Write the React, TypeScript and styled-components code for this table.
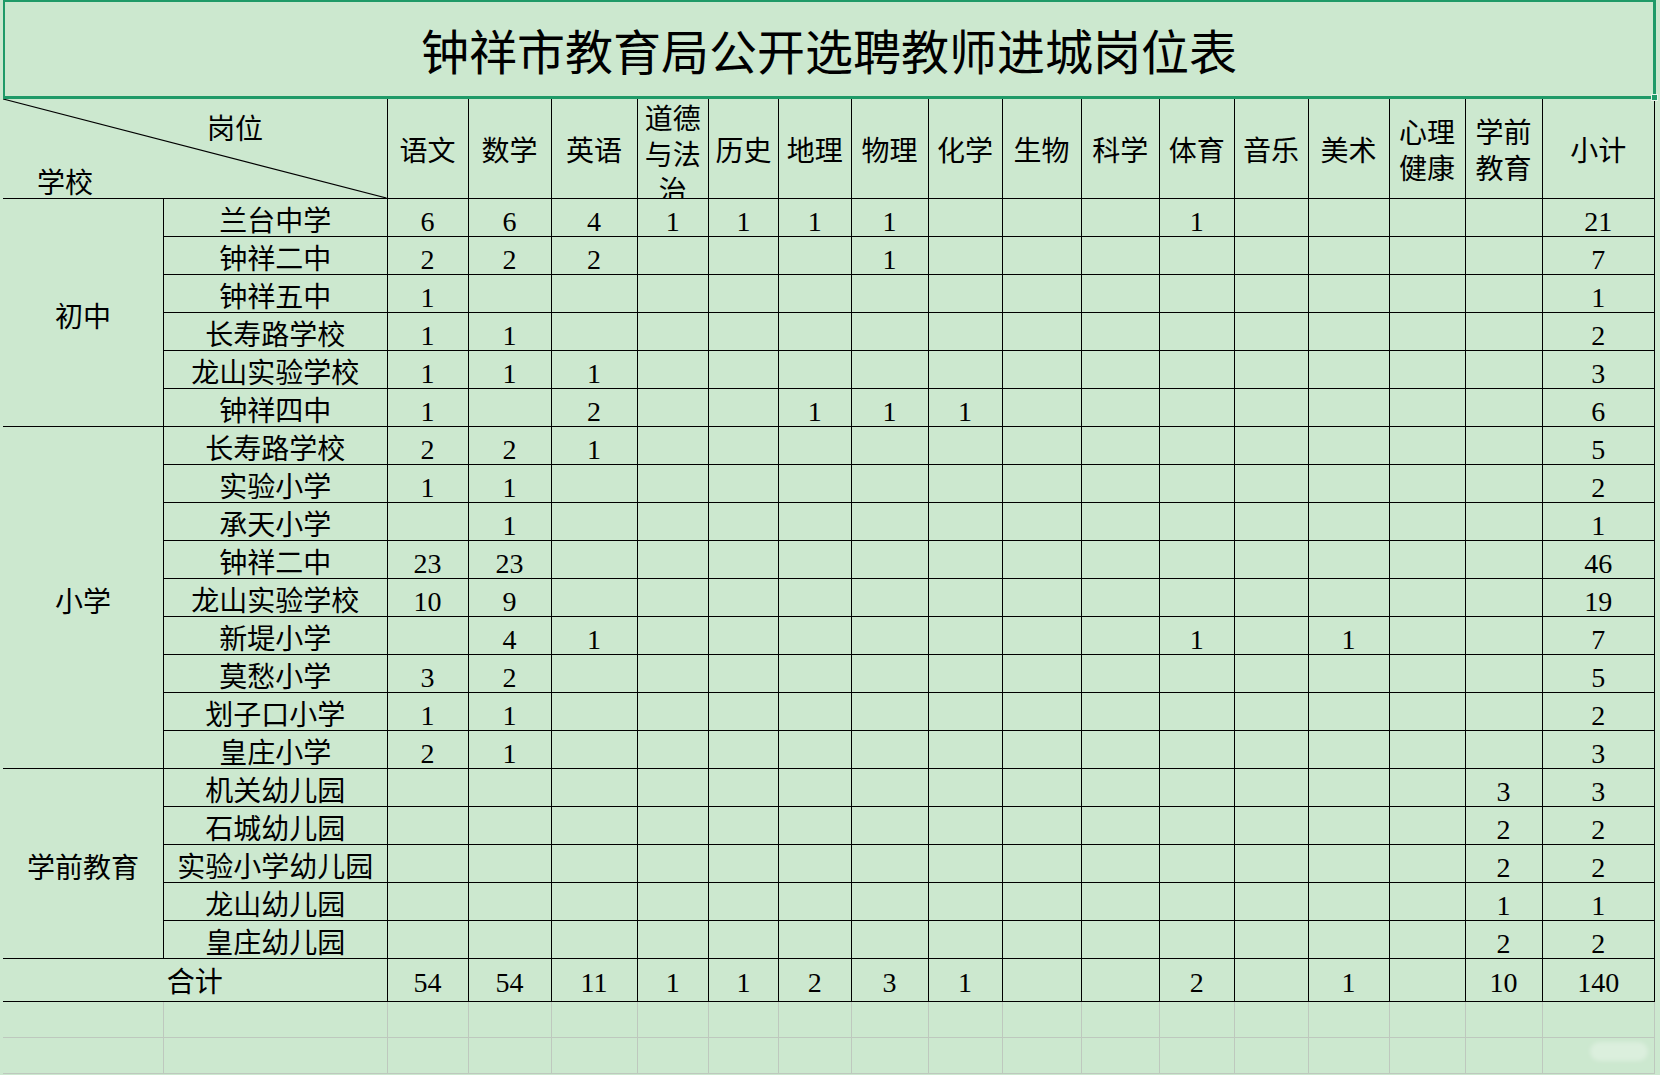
import React from "react";
import styled, { createGlobalStyle } from "styled-components";

const BG = "#cce8cf";
const GREEN = "#1f9a68";
const GRID = "#bec8be";
const FONT = `"Liberation Serif", "Noto Sans CJK SC", serif`;

const COLS = [161, 223.5, 81, 83, 86, 71.5, 70, 72.5, 77, 74, 79, 78.5, 74.5, 74, 81, 76, 77, 112.5];

const SUBJECTS = [
  "语文", "数学", "英语", "道德与法治", "历史", "地理", "物理", "化学", "生物",
  "科学", "体育", "音乐", "美术", "心理健康", "学前教育", "小计",
];

type Row = { name: string; v: Record<number, string> };
type Group = { cat: string; rows: Row[] };

const GROUPS: Group[] = [
  {
    cat: "初中",
    rows: [
      { name: "兰台中学", v: { 0: "6", 1: "6", 2: "4", 3: "1", 4: "1", 5: "1", 6: "1", 10: "1", 15: "21" } },
      { name: "钟祥二中", v: { 0: "2", 1: "2", 2: "2", 6: "1", 15: "7" } },
      { name: "钟祥五中", v: { 0: "1", 15: "1" } },
      { name: "长寿路学校", v: { 0: "1", 1: "1", 15: "2" } },
      { name: "龙山实验学校", v: { 0: "1", 1: "1", 2: "1", 15: "3" } },
      { name: "钟祥四中", v: { 0: "1", 2: "2", 5: "1", 6: "1", 7: "1", 15: "6" } },
    ],
  },
  {
    cat: "小学",
    rows: [
      { name: "长寿路学校", v: { 0: "2", 1: "2", 2: "1", 15: "5" } },
      { name: "实验小学", v: { 0: "1", 1: "1", 15: "2" } },
      { name: "承天小学", v: { 1: "1", 15: "1" } },
      { name: "钟祥二中", v: { 0: "23", 1: "23", 15: "46" } },
      { name: "龙山实验学校", v: { 0: "10", 1: "9", 15: "19" } },
      { name: "新堤小学", v: { 1: "4", 2: "1", 10: "1", 12: "1", 15: "7" } },
      { name: "莫愁小学", v: { 0: "3", 1: "2", 15: "5" } },
      { name: "划子口小学", v: { 0: "1", 1: "1", 15: "2" } },
      { name: "皇庄小学", v: { 0: "2", 1: "1", 15: "3" } },
    ],
  },
  {
    cat: "学前教育",
    rows: [
      { name: "机关幼儿园", v: { 14: "3", 15: "3" } },
      { name: "石城幼儿园", v: { 14: "2", 15: "2" } },
      { name: "实验小学幼儿园", v: { 14: "2", 15: "2" } },
      { name: "龙山幼儿园", v: { 14: "1", 15: "1" } },
      { name: "皇庄幼儿园", v: { 14: "2", 15: "2" } },
    ],
  },
];

const TOTAL = ["54", "54", "11", "1", "1", "2", "3", "1", "", "", "2", "", "1", "", "10", "140"];

const Global = createGlobalStyle`
  html, body {
    margin: 0;
    padding: 0;
    background: ${BG};
    font-family: ${FONT};
    color: #000;
  }
  * { box-sizing: border-box; }
`;

const Page = styled.div`
  position: relative;
  width: 1660px;
  height: 1075px;
  overflow: hidden;
  background: ${BG};
  padding-left: 3px;
  display: flex;
  flex-direction: column;
`;

const TitleBox = styled.div`
  position: relative;
  width: 1653px;
  height: 99px;
  border-top: 2px solid ${GREEN};
  border-left: 2px solid ${GREEN};
  border-right: 3px solid ${GREEN};
  border-bottom: 3px solid ${GREEN};
  display: flex;
  align-items: center;
  justify-content: center;
  padding-top: 10px;
  font-size: 48px;
  line-height: 48px;
  color: #000;
`;

const Handle = styled.div`
  position: absolute;
  right: -5px;
  bottom: -5px;
  width: 7px;
  height: 7px;
  background: ${GREEN};
  border: 1px solid #e8f5ea;
`;

const Table = styled.div`
  display: grid;
  grid-template-columns: ${COLS.map((c) => `${c}px`).join(" ")};
  grid-template-rows: 100px repeat(20, 38px) 43px 36px 36px;
  font-size: 28px;
`;

const Cell = styled.div`
  display: flex;
  justify-content: center;
  border-right: 1px solid #000;
  border-bottom: 1px solid #000;
  overflow: hidden;
  white-space: nowrap;
`;

const Corner = styled(Cell)`
  position: relative;
  grid-column: span 2;
  flex-direction: column;
  justify-content: space-between;
  align-items: flex-start;
  padding-top: 17px;
  line-height: 28px;
`;

const CornerLabel = styled.span<{ $indent: number }>`
  margin-left: ${(p) => p.$indent}px;
`;

const Diagonal = styled.svg`
  position: absolute;
  inset: 0;
  width: 100%;
  height: 100%;
`;

const HeadCell = styled(Cell)<{ $tall?: boolean }>`
  align-items: ${(p) => (p.$tall ? "flex-start" : "center")};
  padding-top: ${(p) => (p.$tall ? "3px" : "6px")};
  line-height: 36px;
  white-space: normal;
  word-break: break-all;
  text-align: center;
`;

const CatCell = styled(Cell)<{ $span: number }>`
  grid-row: span ${(p) => p.$span};
  align-items: center;
  padding-top: 10px;
  line-height: 28px;
`;

const DataCell = styled(Cell)`
  align-items: flex-end;
  line-height: 28px;
`;

const TotalLabel = styled(Cell)`
  grid-column: span 2;
  align-items: flex-end;
  padding-bottom: 4px;
  line-height: 28px;
`;

const TotalCell = styled(Cell)`
  align-items: flex-end;
  padding-bottom: 4px;
  line-height: 28px;
`;

const BlankCell = styled.div`
  border-right: 1px solid ${GRID};
  border-bottom: 1px solid ${GRID};
`;

const Watermark = styled.div`
  position: absolute;
  left: 1590px;
  top: 1042px;
  width: 58px;
  height: 19px;
  border-radius: 10px;
  background: rgba(255, 255, 255, 0.3);
  filter: blur(2px);
`;

export default function App() {
  return (
    <>
      <Global />
      <Page>
        <TitleBox>
          钟祥市教育局公开选聘教师进城岗位表
          <Handle />
        </TitleBox>
        <Table>
          <Corner>
            <Diagonal viewBox="0 0 100 100" preserveAspectRatio="none">
              <line x1="0" y1="0" x2="100" y2="100" stroke="#000" strokeWidth="1.2" vectorEffect="non-scaling-stroke" />
            </Diagonal>
            <CornerLabel $indent={204}>岗位</CornerLabel>
            <CornerLabel $indent={34}>学校</CornerLabel>
          </Corner>
          {SUBJECTS.map((s, i) => (
            <HeadCell key={s} $tall={i === 3}>
              {s}
            </HeadCell>
          ))}
          {GROUPS.map((g) => (
            <React.Fragment key={g.cat}>
              <CatCell $span={g.rows.length}>{g.cat}</CatCell>
              {g.rows.map((r, ri) => (
                <React.Fragment key={g.cat + ri}>
                  <DataCell>{r.name}</DataCell>
                  {SUBJECTS.map((_, ci) => (
                    <DataCell key={ci}>{r.v[ci] ?? ""}</DataCell>
                  ))}
                </React.Fragment>
              ))}
            </React.Fragment>
          ))}
          <TotalLabel>合计</TotalLabel>
          {TOTAL.map((t, i) => (
            <TotalCell key={i}>{t}</TotalCell>
          ))}
          {Array.from({ length: 36 }).map((_, i) => (
            <BlankCell key={i} />
          ))}
        </Table>
        <Watermark />
      </Page>
    </>
  );
}
